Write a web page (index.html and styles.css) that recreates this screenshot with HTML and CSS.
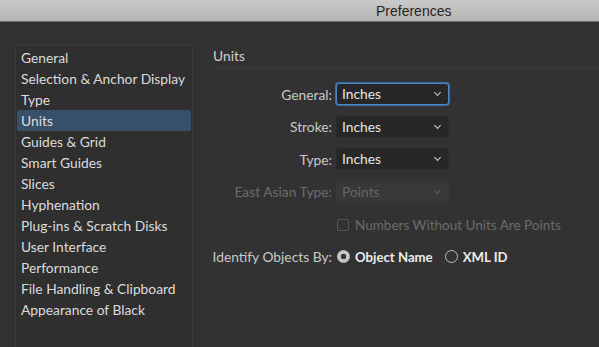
FILE: index.html
```html
<!DOCTYPE html>
<html lang="en">
<head>
  <meta charset="UTF-8">
  <title>Preferences</title>
  <link rel="stylesheet" href="styles.css">
</head>
<body>
  <div class="titlebar">Preferences</div>

  <div class="window">
    <!-- Category list -->
    <ul class="sidebar">
      <li>General</li>
      <li>Selection &amp; Anchor Display</li>
      <li>Type</li>
      <li class="active">Units</li>
      <li>Guides &amp; Grid</li>
      <li>Smart Guides</li>
      <li>Slices</li>
      <li>Hyphenation</li>
      <li>Plug-ins &amp; Scratch Disks</li>
      <li>User Interface</li>
      <li>Performance</li>
      <li>File Handling &amp; Clipboard</li>
      <li>Appearance of Black</li>
    </ul>

    <div class="panel">
      <div class="panel-title">Units</div>

      <div class="form">
        <label class="lbl">General:</label>
        <div class="select focused">Inches<span class="chev"></span></div>

        <label class="lbl">Stroke:</label>
        <div class="select">Inches<span class="chev"></span></div>

        <label class="lbl">Type:</label>
        <div class="select">Inches<span class="chev"></span></div>

        <label class="lbl disabled">East Asian Type:</label>
        <div class="select disabled">Points<span class="chev"></span></div>

        <span></span>
        <div class="check disabled"><span class="box"></span>Numbers Without Units Are Points</div>

        <label class="lbl">Identify Objects By:</label>
        <div class="radios">
          <span class="radio on"></span><span class="radio-text">Object Name</span>
          <span class="radio"></span><span class="radio-text">XML ID</span>
        </div>
      </div>
    </div>
  </div>
</body>
</html>
```

FILE: styles.css
```css
body {
  margin: 0;
  background: #323232;
  font-family: Lato, "Open Sans", sans-serif;
  font-size: 13.8px;
  color: #d4d4d4;
  overflow: hidden;
}
.titlebar {
  height: 21px;
  line-height: 22px;
  padding-left: 376px;
  background: linear-gradient(#c9c9c9, #b5b5b5);
  border-bottom: 1px solid #6e6e6e;
  color: #262626;
  font-family: "Liberation Sans", Arial, sans-serif;
  font-size: 14px;
}
.window {
  display: flex;
  padding: 23px 0 0 15px;
}
.sidebar {
  list-style: none;
  margin: 0;
  padding: 1px 1px;
  width: 174px;
  height: 300px;
  border: 1px solid #3b3b3b;
  border-bottom: none;
  border-radius: 3px 3px 0 0;
  background: #2f2f2f;
  flex-shrink: 0;
}
.sidebar li {
  height: 21px;
  line-height: 21px;
  padding-left: 4px;
  color: #dcdcdc;
  white-space: nowrap;
}
.sidebar li.active {
  background: #365069;
  border-radius: 2px;
}
.panel {
  flex: 1;
  margin-left: 19px;
}
.panel-title {
  height: 21px;
  line-height: 20px;
  margin-top: 1px;
  padding-left: 1px;
  border-bottom: 1px solid #3a3a3a;
  color: #cfcfcf;
}
.form {
  display: grid;
  grid-template-columns: 120px auto;
  grid-auto-rows: 22px;
  row-gap: 10.5px;
  column-gap: 4px;
  align-items: center;
  margin-top: 15px;
}
.lbl {
  text-align: right;
  color: #c9c9c9;
  white-space: nowrap;
}
.lbl.disabled {
  color: #6c6c6c;
}
.select {
  position: relative;
  width: 106px;
  height: 20px;
  line-height: 20px;
  padding-left: 5px;
  border: 1px solid #2c2c2c;
  border-radius: 3px;
  background: #272727;
  color: #e6e6e6;
}
.select.focused {
  border-color: #4a86c3;
  box-shadow: 0 0 0 1px #3b6ea3;
}
.select.disabled {
  background: #383838;
  border-color: #383838;
  color: #676767;
}
.chev {
  position: absolute;
  right: 8px;
  top: 6px;
  width: 4px;
  height: 4px;
  border-right: 1px solid #cfcfcf;
  border-bottom: 1px solid #cfcfcf;
  transform: rotate(45deg);
}
.select.disabled .chev {
  border-color: #5e5e5e;
}
.check {
  display: flex;
  align-items: center;
  margin-top: 1px;
  color: #6b6b6b;
  white-space: nowrap;
  font-size: 13.5px;
}
.box {
  width: 10px;
  height: 10px;
  margin: 0 6px 0 1px;
  border: 1px solid #555;
  border-radius: 2px;
}
.radios {
  display: flex;
  align-items: center;
  white-space: nowrap;
}
.radio {
  box-sizing: border-box;
  width: 13px;
  height: 13px;
  margin-left: 1px;
  border: 1px solid #bdbdbd;
  border-radius: 50%;
}
.radio.on {
  background: radial-gradient(circle, #333 0 2.5px, #c6c6c6 3px);
  border-color: #c6c6c6;
}
.radio-text {
  margin: 0 11px 0 5px;
  color: #ececec;
  font-weight: bold;
  font-size: 13.2px;
}
```
